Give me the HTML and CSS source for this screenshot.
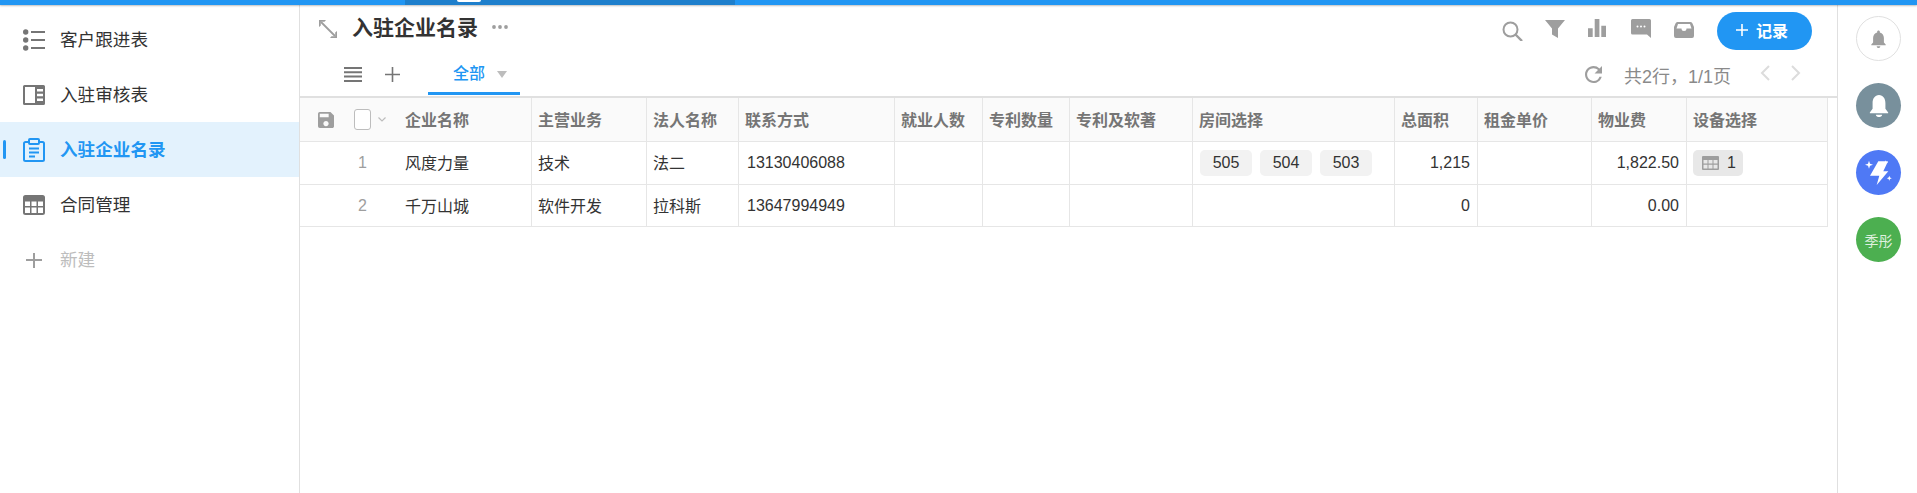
FILE: index.html
```html
<!DOCTYPE html>
<html lang="zh">
<head>
<meta charset="utf-8">
<title>入驻企业名录</title>
<link rel="stylesheet" href="styles.css">
</head>
<body>
<div class="topbar"><div class="topbar-seg"><span class="topbar-pill"></span></div></div>
<div class="app">
  <aside class="sidebar">
    <a class="nav-item">
      <svg class="nav-icon" viewBox="0 0 22 22"><g fill="#757575"><circle cx="2.7" cy="3" r="2.7"/><circle cx="2.7" cy="11" r="2.7"/><circle cx="2.7" cy="19" r="2.7"/><rect x="8" y="2" width="14" height="2"/><rect x="8" y="10" width="14" height="2"/><rect x="8" y="18" width="14" height="2"/></g></svg>
      <span class="nav-label">客户跟进表</span>
    </a>
    <a class="nav-item">
      <svg class="nav-icon" viewBox="0 0 22 20"><path fill="#757575" fill-rule="evenodd" d="M1.500 0h19A1.500 1.500 0 0 1 22 1.500v17a1.500 1.500 0 0 1-1.500 1.500h-19A1.500 1.500 0 0 1 0 18.500v-17A1.500 1.500 0 0 1 1.500 0zM2 2v16h10V2zm12 2v2.500h6V4zm0 4.800v2.500h6V8.800zm0 4.700V16h6v-2.500z"/></svg>
      <span class="nav-label">入驻审核表</span>
    </a>
    <a class="nav-item is-active">
      <svg class="nav-icon" viewBox="0 0 22 24"><g fill="none" stroke="#2196f3" stroke-width="2"><path d="M6 4H2.500A1.500 1.500 0 0 0 1 5.500v16A1.500 1.500 0 0 0 2.500 23h17a1.500 1.500 0 0 0 1.500-1.500v-16A1.500 1.500 0 0 0 19.500 4H16"/><rect x="6" y="1" width="10" height="5" rx="1"/><path d="M6 10.500h10M6 14.500h10M6 18.500h6"/></g></svg>
      <span class="nav-label">入驻企业名录</span>
    </a>
    <a class="nav-item">
      <svg class="nav-icon" viewBox="0 0 22 20"><path fill="#757575" fill-rule="evenodd" d="M2.500 0h17A2.500 2.500 0 0 1 22 2.500v15a2.500 2.500 0 0 1-2.500 2.500h-17A2.500 2.500 0 0 1 0 17.500v-15A2.500 2.500 0 0 1 2.500 0zM2 6.500V11h5V6.500zm6.500 0V11h5V6.500zm6.500 0V11h5V6.500zM2 12.500V18h5v-5.500zm6.500 0V18h5v-5.500zm6.500 0V18h5v-5.500z"/></svg>
      <span class="nav-label">合同管理</span>
    </a>
    <a class="nav-item is-new">
      <svg class="nav-icon" viewBox="0 0 22 22"><path fill="#9e9e9e" d="M10 4h2v6h7v2h-7v7h-2v-7H3v-2h7z"/></svg>
      <span class="nav-label">新建</span>
    </a>
  </aside>

  <main class="main">
    <header class="head">
      <div class="head-top">
        <div class="title-wrap">
          <svg class="expand" viewBox="0 0 18 18"><g fill="none" stroke="#9e9e9e" stroke-width="1.800"><path d="M2 2l14 14"/></g><path fill="#9e9e9e" d="M0 0h7L5.500 1.800H1.800V5.500L0 7zM18 18h-7l1.500-1.800h3.700v-3.700L18 11z"/></svg>
          <h1 class="title">入驻企业名录</h1>
          <svg class="more" viewBox="0 0 16 4"><g fill="#9e9e9e"><circle cx="2" cy="2" r="1.900"/><circle cx="8" cy="2" r="1.900"/><circle cx="14" cy="2" r="1.900"/></g></svg>
        </div>
        <div class="tools">
          <svg class="tool" viewBox="0 0 21 22"><circle cx="8.500" cy="10.500" r="7" fill="none" stroke="#9e9e9e" stroke-width="2"/><path fill="none" stroke="#9e9e9e" stroke-width="2.400" d="M13.500 15.500l6.500 6.500"/></svg>
          <svg class="tool" viewBox="0 0 21 22"><path fill="#9e9e9e" d="M0 1h20l-7 8.500V19l-6-3.500V9.500z"/></svg>
          <svg class="tool" viewBox="0 0 21 22"><path fill="#9e9e9e" d="M0 9.300h4.700V18H0zM6.700 0h4.700v18H6.700zM13.300 6.700H18V18h-4.700z"/></svg>
          <svg class="tool" viewBox="0 0 21 22"><path fill="#9e9e9e" fill-rule="evenodd" d="M1.500 0h17A1.500 1.500 0 0 1 20 1.500V19l-4-3.500H1.500A1.500 1.500 0 0 1 0 14V1.500A1.500 1.500 0 0 1 1.500 0zM6.500 6.500a1 1 0 1 0 0 2 1 1 0 0 0 0-2zm3.500 0a1 1 0 1 0 0 2 1 1 0 0 0 0-2zm3.500 0a1 1 0 1 0 0 2 1 1 0 0 0 0-2z"/></svg>
          <svg class="tool" viewBox="0 0 21 22"><path fill="#9e9e9e" fill-rule="evenodd" d="M3.500 3h13a2 2 0 0 1 2 1.500L20 8v9a2 2 0 0 1-2 2H2a2 2 0 0 1-2-2V8l1.500-3.500A2 2 0 0 1 3.500 3zM4 5L2.500 9.500h5a2.500 2.500 0 0 0 5 0h5L16 5z"/></svg>
          <button class="add-btn"><svg class="add-plus" viewBox="0 0 12 12"><path fill="#fff" d="M5.200 0h1.600v5.200H12v1.600H6.800V12H5.200V6.800H0V5.200h5.200z"/></svg>记录</button>
        </div>
      </div>
      <div class="head-bottom">
        <div class="tabs-wrap">
          <svg class="lines" viewBox="0 0 18 15"><path fill="#757575" d="M0 0h18v2H0zM0 4.300h18v2H0zM0 8.600h18v2H0zM0 13h18v2H0z"/></svg>
          <svg class="plus" viewBox="0 0 15 15"><path fill="#757575" d="M6.700 0h1.600v6.700H15v1.600H8.300V15H6.700V8.300H0V6.700h6.700z"/></svg>
          <div class="tab">全部<span class="tab-caret"></span></div>
        </div>
        <div class="pager">
          <svg class="refresh" viewBox="4 4 16 16"><path fill="#9e9e9e" d="M17.650 6.350A7.958 7.958 0 0 0 12 4c-4.420 0-7.990 3.580-7.990 8s3.570 8 7.990 8c3.730 0 6.840-2.550 7.730-6h-2.080A5.990 5.990 0 0 1 12 18c-3.310 0-6-2.690-6-6s2.690-6 6-6c1.660 0 3.140.69 4.220 1.780L13 11h7V4l-2.350 2.350z"/></svg>
          <span class="pager-text">共2行，1/1页</span>
          <svg class="chev" viewBox="0 0 10 16"><path fill="none" stroke="#dcdcdc" stroke-width="2" d="M9 1L2 8l7 7"/></svg>
          <svg class="chev" viewBox="0 0 10 16"><path fill="none" stroke="#dcdcdc" stroke-width="2" d="M1 1l7 7-7 7"/></svg>
        </div>
      </div>
    </header>

    <div class="grid">
      <div class="row row-head">
        <div class="cell cell-tools">
          <svg class="save" viewBox="3 3 18 18"><path fill="#9e9e9e" d="M17 3H5a2 2 0 0 0-2 2v14a2 2 0 0 0 2 2h14c1.100 0 2-.9 2-2V7l-4-4zm-5 16c-1.660 0-3-1.340-3-3s1.340-3 3-3 3 1.340 3 3-1.340 3-3 3zm3-10H5V5h10v4z"/></svg>
          <span class="check"></span>
          <svg class="check-caret" viewBox="0 0 8 5"><path fill="none" stroke="#bdbdbd" stroke-width="1.200" d="M.5.5L4 4 7.500.5"/></svg>
        </div>
        <div class="cell cell-name">企业名称</div>
        <div class="cell">主营业务</div>
        <div class="cell">法人名称</div>
        <div class="cell">联系方式</div>
        <div class="cell">就业人数</div>
        <div class="cell">专利数量</div>
        <div class="cell">专利及软著</div>
        <div class="cell">房间选择</div>
        <div class="cell">总面积</div>
        <div class="cell">租金单价</div>
        <div class="cell">物业费</div>
        <div class="cell">设备选择</div>
      </div>
      <div class="row row-a">
        <div class="cell cell-idx">1</div>
        <div class="cell cell-name">风度力量</div>
        <div class="cell">技术</div>
        <div class="cell">法二</div>
        <div class="cell cell-phone">13130406088</div>
        <div class="cell"></div>
        <div class="cell"></div>
        <div class="cell"></div>
        <div class="cell cell-tags"><span class="tag">505</span><span class="tag">504</span><span class="tag">503</span></div>
        <div class="cell cell-num">1,215</div>
        <div class="cell"></div>
        <div class="cell cell-num">1,822.50</div>
        <div class="cell cell-device">
          <span class="device">
            <svg class="device-icon" viewBox="0 0 17 14"><path fill="#9e9e9e" fill-rule="evenodd" d="M1 0h15a1 1 0 0 1 1 1v12a1 1 0 0 1-1 1H1a1 1 0 0 1-1-1V1a1 1 0 0 1 1-1zm.5 4v3.500h4V4zm5 0v3.500h4V4zm5 0v3.500h4V4zm-10 4.700v3.800h4V8.700zm5 0v3.800h4V8.700zm5 0v3.800h4V8.700z"/></svg>1
          </span>
        </div>
      </div>
      <div class="row row-b">
        <div class="cell cell-idx">2</div>
        <div class="cell cell-name">千万山城</div>
        <div class="cell">软件开发</div>
        <div class="cell">拉科斯</div>
        <div class="cell cell-phone">13647994949</div>
        <div class="cell"></div>
        <div class="cell"></div>
        <div class="cell"></div>
        <div class="cell"></div>
        <div class="cell cell-num">0</div>
        <div class="cell"></div>
        <div class="cell cell-num">0.00</div>
        <div class="cell"></div>
      </div>
    </div>
  </main>

  <aside class="rail">
    <div class="circle circle-outline"><svg class="bell-sm" viewBox="4 2 16 20"><path fill="#9e9e9e" d="M12 22c1.100 0 2-.9 2-2h-4c0 1.100.89 2 2 2zm6-6v-5c0-3.070-1.640-5.640-4.500-6.320V4c0-.83-.67-1.500-1.500-1.500s-1.500.67-1.500 1.500v.68C7.630 5.360 6 7.920 6 11v5l-2 2v1h16v-1l-2-2z"/></svg></div>
    <div class="circle circle-slate"><svg class="bell-lg" viewBox="0 0 24 26"><path fill="#fff" d="M12 1C7.500 1 5 5 5 10v6l-3 4v1h20v-1l-3-4v-6c0-5-2.500-9-7-9zM8.500 22.500h7C15 24.500 13.500 25 12 25s-3-.5-3.500-2.500z"/></svg></div>
    <div class="circle circle-blue"><svg class="spark" viewBox="0 0 45 45"><path fill="#fff" d="M22.300 11.300H32l-4.700 10h5L20.700 35l2.600-9.300H14zM13 10.700l1 3 3 1-3 1-1 3-1-3-3-1 3-1zM29.700 10.200l.7 1.800 1.800.7-1.800.7-.7 1.800-.7-1.800-1.800-.7 1.800-.7zM33.300 25.800l.7 1.800 1.800.7-1.800.7-.7 1.800-.7-1.800-1.800-.7 1.800-.7z"/></svg></div>
    <div class="circle circle-green">季彤</div>
  </aside>
</div>
</body>
</html>
```
FILE: styles.css
```css
* { box-sizing: border-box; }
html, body { margin: 0; height: 100%; overflow: hidden; background: #fff; }
body {
  font-family: "Liberation Sans", "Noto Sans CJK SC", sans-serif;
  color: #333;
  display: flex;
  flex-direction: column;
}
svg { display: block; flex: none; }

.topbar {
  height: 5px;
  flex: none;
  background: #2196f3;
  box-shadow: 0 1px 2px rgba(0, 0, 0, .25);
  padding-left: 405px;
  position: relative;
  z-index: 2;
}
.topbar-seg { width: 330px; height: 5px; background: #1e7fcc; padding-left: 52px; }
.topbar-pill { display: block; width: 24px; height: 2px; background: #fff; border-radius: 0 0 3px 3px; }

.app { flex: 1; display: flex; min-height: 0; }

.sidebar {
  width: 300px;
  flex: none;
  border-right: 1px solid #e0e0e0;
  padding-top: 7px;
}
.nav-item {
  height: 55px;
  display: flex;
  align-items: center;
  gap: 15px;
  padding-left: 23px;
  font-size: 17.6px;
  color: #333;
  position: relative;
}
.nav-label { padding-bottom: 2px; }
.nav-icon { width: 22px; height: auto; }
.is-active { background: #e3f2fd; color: #2196f3; font-weight: 700; }
.is-active::before {
  content: "";
  position: absolute;
  left: 3px;
  top: 18px;
  width: 3px;
  height: 19px;
  border-radius: 2px;
  background: #2196f3;
}
.is-new { color: #bdbdbd; }

.main { flex: 1; min-width: 0; display: flex; flex-direction: column; }
.head { height: 93px; flex: none; border-bottom: 2px solid #e0e0e0; display: flex; flex-direction: column; }
.head-top { height: 45px; display: flex; justify-content: space-between; padding: 7px 25px 0 19px; }
.title-wrap { display: flex; align-items: center; height: 32px; }
.expand { width: 18px; height: 18px; margin-top: 1px; }
.title { margin: 0 0 0 15px; font-size: 21px; line-height: 32px; font-weight: 700; color: #333; }
.more { width: 16px; height: 4px; margin: -2px 0 0 14px; }
.tools { display: flex; align-items: flex-start; gap: 22px; }
.tool { width: 21px; height: 22px; margin-top: 7px; }
.add-btn {
  width: 95px;
  height: 38px;
  border: 0;
  border-radius: 19px;
  background: #2196f3;
  color: #fff;
  font: 700 16px "Liberation Sans", "Noto Sans CJK SC", sans-serif;
  display: flex;
  align-items: center;
  gap: 8px;
  padding: 0 0 3px 19px;
}
.add-plus { width: 12px; height: 12px; }

.head-bottom { flex: 1; display: flex; justify-content: space-between; padding: 0 36px 0 44px; }
.tabs-wrap { display: flex; align-items: flex-start; }
.lines { width: 18px; height: 15px; margin-top: 17px; }
.plus { width: 15px; height: 15px; margin: 17px 0 0 23px; }
.tab {
  width: 92px;
  height: 45px;
  margin-left: 28px;
  padding: 12px 0 0 25px;
  display: flex;
  align-items: flex-start;
  font-size: 16px;
  font-weight: 500;
  line-height: 24px;
  color: #2196f3;
  border-bottom: 3px solid #2196f3;
}
.tab-caret {
  width: 0;
  height: 0;
  margin: 9px 0 0 12px;
  border-left: 5.500px solid transparent;
  border-right: 5.500px solid transparent;
  border-top: 7px solid #bdbdbd;
}
.pager { display: flex; align-items: center; height: 46px; }
.refresh { width: 17px; height: 17px; margin-top: 2px; }
.pager-text { margin: 0 29px 0 22px; padding-top: 4px; font-size: 18px; color: #8a8a8a; flex: 0 0 106px; white-space: nowrap; }
.chev { width: 10px; height: 16px; margin-right: 21px; }
.chev:last-child { margin-right: 0; }

.grid { flex: none; }
.row {
  display: grid;
  grid-template-columns: 99px 133px 115px 92px 156px 88px 87px 123px 202px 83px 114px 95px 141px;
  width: 1528px;
  border-bottom: 1px solid #e6e6e6;
  font-size: 16px;
  color: #333;
}
.row-head { height: 44px; background: #fafafa; font-weight: 700; color: #757575; }
.row-a { height: 43px; }
.row-b { height: 42px; }
.cell {
  border-right: 1px solid #e6e6e6;
  padding: 0 6px 2px;
  display: flex;
  align-items: center;
  white-space: nowrap;
  min-width: 0;
}
.row-head .cell-tools { border-right: 0; padding: 0 0 0 18px; }
.save { width: 16px; height: 16px; }
.check { width: 17px; height: 21px; margin-left: 20px; border: 1px solid #bdbdbd; border-radius: 3px; background: #fff; }
.check-caret { width: 8px; height: 5px; margin-left: 7px; }
.cell-idx { border-right: 0; padding: 0 0 0 58px; color: #9e9e9e; }
.cell-name { padding-left: 6px; }
.cell-phone { padding: 0 0 0 8px; }
.cell-num { justify-content: flex-end; padding: 0 7px 0 0; }
.cell-tags { gap: 8px; padding: 0 0 0 7px; }
.tag {
  width: 52px;
  height: 26px;
  display: flex;
  align-items: center;
  justify-content: center;
  border-radius: 5px;
  background: #f2f2f2;
}
.cell-device { padding: 0 0 0 6px; }
.device {
  width: 50px;
  height: 26px;
  display: flex;
  align-items: center;
  gap: 8px;
  padding-left: 9px;
  border-radius: 5px;
  background: #e8e8e8;
}
.device-icon { width: 17px; height: 14px; }

.rail {
  width: 80px;
  flex: none;
  border-left: 1px solid #e0e0e0;
  display: flex;
  flex-direction: column;
  gap: 22px;
  padding: 11px 0 0 18px;
}
.circle {
  width: 45px;
  height: 45px;
  border-radius: 50%;
  display: flex;
  align-items: center;
  justify-content: center;
}
.circle-outline { border: 1px solid #e0e0e0; }
.circle-slate { background: #78909c; }
.circle-blue { background: #4f79f5; }
.circle-green { background: #4caf50; color: #dff0df; font-size: 14px; }
.bell-sm { width: 15px; height: 18px; }
.bell-lg { width: 22px; height: 24px; }
.spark { width: 45px; height: 45px; }
```
